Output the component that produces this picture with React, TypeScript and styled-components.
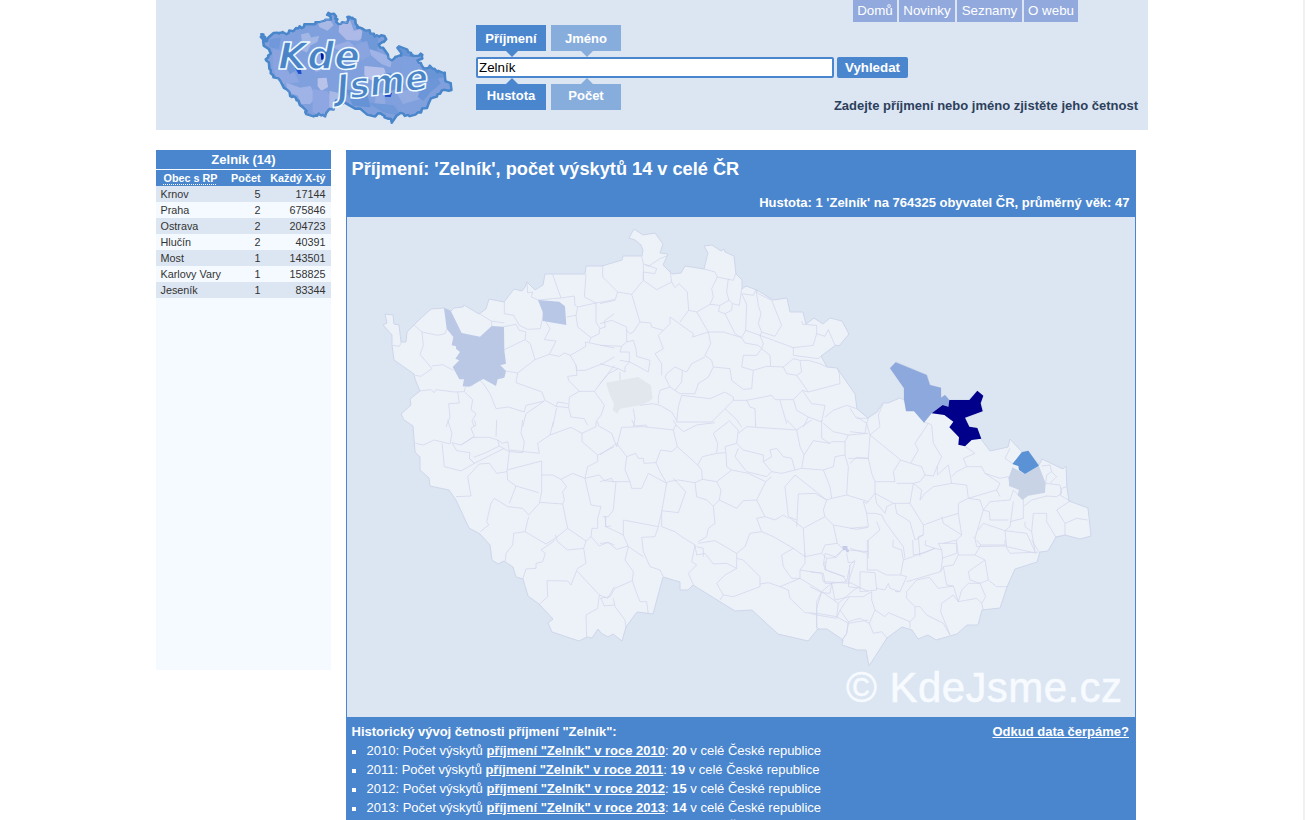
import React from "react";
import styled, { createGlobalStyle } from "styled-components";

const blue = "#4a86ce";
const pale = "#dce6f2";

const GlobalStyle = createGlobalStyle`
  html, body { margin: 0; padding: 0; background: #fff; }
  body { height: 820px; overflow: hidden; font-family: "Liberation Sans", Arial, sans-serif; font-size: 13px; color: #2b3a55; }
  * { box-sizing: border-box; }
`;

const Page = styled.div`
  height: 820px;
  overflow: hidden;
  padding-left: 156px;
  border-right: 2px solid #f1f1f1;
`;
const Header = styled.header`
  width: 992px;
  height: 130px;
  background: ${pale};
  display: grid;
  grid-template-columns: 320px 357px 315px;
`;
const LogoLink = styled.a`
  display: block;
  padding: 8px 0 0 100px;
  svg { display: block; }
`;
const Search = styled.form`
  padding-top: 25px;
  width: 440px;
  margin: 0;
`;
const TabRow = styled.div<{ $below?: boolean }>`
  display: flex;
  gap: 5px;
  height: 26px;
  margin-top: ${(p) => (p.$below ? "6px" : "0")};
`;
const Tab = styled.button<{ $active?: boolean; $below?: boolean }>`
  position: relative;
  width: 70px;
  height: 26px;
  border: 0;
  padding: ${(p) => (p.$below ? "0 0 3px" : "1px 0 0")};
  color: #fff;
  font: bold 13px "Liberation Sans", Arial, sans-serif;
  background: ${(p) => (p.$active ? blue : "#87addd")};
  &::after {
    content: "";
    position: absolute;
    left: 30px;
    ${(p) => (p.$below ? "top: -6px" : "bottom: -6px")};
    border: 6px solid transparent;
    border-width: ${(p) => (p.$below ? "0 6px 6px" : "6px 6px 0")};
    border-${(p) => (p.$below ? "bottom" : "top")}-color: ${(p) => (p.$active ? blue : "#87addd")};
  }
`;
const SearchRow = styled.div`
  display: flex;
  gap: 3px;
  margin-top: 6px;
`;
const SearchInput = styled.input`
  width: 358px;
  height: 21px;
  border: 2px solid ${blue};
  border-radius: 2px;
  background: #fff;
  padding: 0 1px;
  color: #000;
  font: 13.33px "Liberation Sans", Arial, sans-serif;
  outline: none;
`;
const SearchButton = styled.button`
  width: 71px;
  height: 21px;
  border: 0;
  border-radius: 2px;
  padding: 0;
  background: ${blue};
  color: #fff;
  font: bold 13.3px "Liberation Sans", Arial, sans-serif;
`;
const HeaderRight = styled.div`
  display: flex;
  flex-direction: column;
  align-items: flex-end;
  padding-right: 10px;
`;
const Nav = styled.nav`
  display: flex;
  gap: 2px;
  padding-right: 60px;
`;
const NavLink = styled.a<{ $w: number }>`
  width: ${(p) => p.$w}px;
  height: 22px;
  line-height: 21px;
  font-size: 13.33px;
  text-align: center;
  color: #fff;
  background: #91a9dc;
  white-space: nowrap;
`;
const Hint = styled.p`
  margin: 76px 0 0;
  font-weight: bold;
  line-height: 16px;
  white-space: nowrap;
  color: #2c405c;
`;
const Columns = styled.main`
  display: flex;
  gap: 15px;
  margin-top: 20px;
`;
const Sidebar = styled.aside`
  width: 175px;
  height: 520px;
  background: #f4faff;
`;
const SideTitle = styled.h2`
  margin: 0 0 1px;
  height: 19px;
  line-height: 19px;
  font-size: 13px;
  text-align: center;
  color: #fff;
  background: ${blue};
`;
const SideRow = styled.div<{ $head?: boolean; $odd?: boolean }>`
  display: grid;
  grid-template-columns: 61px 39px 65px;
  height: 16px;
  line-height: 16px;
  padding: 0 5px 0 4.5px;
  font-size: 10.8px;
  font-weight: ${(p) => (p.$head ? "bold" : "normal")};
  color: ${(p) => (p.$head ? "#fff" : "#333")};
  background: ${(p) => (p.$head ? blue : p.$odd ? pale : "#f4faff")};
  white-space: nowrap;
`;
const Num = styled.span`
  text-align: right;
`;
const Abbr = styled.span`
  padding-left: 3px;
  text-decoration: underline dotted 1px;
  text-underline-offset: 2px;
  text-decoration-skip-ink: none;
`;
const Panel = styled.section`
  width: 790px;
  height: 700px;
  background: ${blue};
  color: #fff;
  padding: 0 1px;
`;
const PanelHead = styled.div`
  height: 67px;
  padding: 8px 5.5px 0 4.5px;
`;
const Title = styled.h1`
  margin: 0;
  font-size: 18.2px;
  line-height: 22px;
`;
const Density = styled.p`
  margin: 15px 0 0;
  text-align: right;
  font-weight: bold;
  font-size: 13px;
  line-height: 16px;
`;
const MapBox = styled.div`
  height: 500px;
  background: ${pale};
  svg { display: block; }
`;
const HistoryHead = styled.div`
  display: flex;
  justify-content: space-between;
  padding: 5px 6px 0 4.5px;
  font-weight: bold;
  font-size: 13px;
  line-height: 19px;
`;
const SourceLink = styled.a`
  text-decoration: underline;
`;
const History = styled.ul`
  margin: 0;
  padding: 0 0 0 4px;
  list-style: none;
`;
const HistoryItem = styled.li`
  display: flex;
  align-items: center;
  height: 19px;
  font-size: 13px;
  line-height: 19px;
  white-space: pre;
  &::before { content: ""; width: 4px; height: 4px; margin: 2px 10.5px 0 1px; background: #fff; }
  a { font-weight: bold; text-decoration: underline; }
`;

const outline =
  "M385,314 393,315 394,324 399,325 401,342 406,342 407,332 414,325 420,319 431,309 444,308 451,311 454,308 463,307 464,305 479,314 486,309 489,299 504,302 514,289 522,291 525,287 527,282 535,290 543,285 545,274 585,274 586,266 602,266 622,260 623,256 642,256 643,250 641,245 635,240 629,238 634,229 643,235 655,233 663,244 660,253 668,254 663,265 672,274 681,273 685,266 704,269 708,253 704,246 712,245 721,251 724,249 725,252 734,256 736,274 742,280 742,289 746,286 757,290 773,300 787,298 790,312 803,312 806,324 814,318 823,324 830,318 842,321 849,334 839,346 836,345 821,356 827,367 837,368 855,394 857,409 868,418 877,412 883,403 888,403 900,398 904,400 904,388 890,368 896,362 927,375 930,385 941,388 941,398 945,395 949,400 969,400 977,391 983,396 981,403 983,411 965,418 969,427 977,428 981,439 990,451 1008,447 1010,439 1022,452 1028,451 1039,465 1042,459 1063,469 1066,466 1067,488 1069,501 1088,508 1091,536 1080,539 1065,535 1056,537 1048,551 1040,552 1037,562 1015,569 1007,587 1000,608 982,610 978,625 967,625 957,634 936,640 928,635 918,639 912,630 902,627 887,638 869,666 866,650 857,650 842,645 843,640 827,629 818,629 808,641 778,634 752,610 735,611 693,585 688,590 680,590 680,582 663,577 653,614 637,612 626,627 622,641 613,634 608,637 601,633 598,629 592,638 587,637 579,641 552,632 548,623 553,619 539,604 528,596 523,579 516,577 513,567 504,561 498,564 492,560 490,545 480,534 469,528 456,500 449,490 430,486 429,478 420,470 420,457 415,452 413,426 404,420 401,414 411,405 410,399 420,391 415,379 414,374 394,360 392,345 392,335 383,325 387,323Z";

type Sector = { x: number; y: number; lines: string };

/* District borders, grouped by map sector; three units per pixel. */
const sectors: Sector[] = [
  { x: 346, y: 217, lines: "205,325 228,345 275,355 297,350 302,337;228,345 232,385 222,412 258,455;258,447 290,443 322,460;166,376 160,388 140,385;208,475 225,478 258,455;222,522 255,518 265,527 270,518 325,525 355,524 358,510;335,525 340,558 308,560 312,600 300,630;355,524 380,548 375,578 390,590 378,612 385,630;375,508 400,488 412,500 432,530 450,575 487,570 535,585 540,565 595,552;400,290 437,313 437,327;475,255 475,290 503,295 520,325 545,337 583,335 590,300;437,312 475,318;474,329 510,322 520,340 540,345 537,368 475,398;537,368 553,380 567,428 515,468 480,462;515,468 510,497 588,525 597,550 630,568 635,555 665,560;567,428 610,412 630,372 595,368 612,335 600,315;610,412 640,418 655,408 673,415 690,445 693,460 718,460 770,440 805,420;673,415 720,388 718,375 805,393;543,194 545,228 560,225 556,240 576,249 645,243;620,172 645,243 685,237 687,265 695,270 690,295 662,300;720,172 715,240 750,258 795,250 805,247;695,270 750,258 750,315 762,335 778,330 775,312 805,290;690,295 695,330 735,362 730,375;735,362 760,350 760,335;690,445 693,475 665,478 668,490 700,523 745,523 805,445;700,523 670,540 668,572 630,568;745,523 775,565 765,595 752,610 760,630;668,572 675,600 715,605 725,625;632,572 620,630;595,552 540,590 530,630" },
  { x: 600, y: 217, lines: "8,146 8,180 53,225 95,232 130,190 130,140 125,117;0,260 45,250 53,225;95,232 120,315 100,345 90,350 80,340;130,140 145,148 180,125 205,115;135,142 170,155 165,170 130,165 130,190 170,218 215,195 210,160;215,195 225,212 237,200 262,225 266,280 290,285 330,262 340,240 335,215 352,180 345,165 312,156;120,315 152,318 155,330 190,340 175,355 190,395 165,410 185,440 185,475;190,340 210,320 210,300 280,350 278,360 325,345;240,315 266,280;290,285 325,345 332,380 315,415 335,430 340,450 390,455;352,180 400,190 407,170;385,185 380,225 387,250 360,265 330,262;387,250 397,258 395,280 375,290 355,283 360,265;425,215 418,265 397,260;425,230 440,262 437,340 425,362 405,350 375,290;425,230 460,235 468,218 475,265 483,290 475,320 485,345 480,355 437,340;468,218 475,230 515,250 545,325 525,358 485,345;325,345 370,345 425,362;480,355 580,392 640,385 650,350 650,325 608,322 605,312;425,362 435,378 475,385 485,395 470,415 430,415 425,450 460,460;480,355 490,380 485,395 510,415 512,448;460,460 500,448 550,450 580,425 600,430 625,430;580,392 580,415 655,425 663,418;460,460 455,515 430,517 395,490 390,455;340,450 325,480 295,500 285,530 240,530 225,520 245,495 247,460 260,465 275,440 315,420;247,460 225,450 200,470 195,480 210,510 225,520;550,450 560,470 590,475 625,525 720,500 718,470 712,452;600,430 605,465 590,475;625,430 660,440 680,450;245,535 330,545 375,525 400,540 400,550 440,550 515,535 525,548 580,548 607,520 625,525;400,550 375,575 335,615 230,615 235,570 245,535;375,575 410,608 425,630;440,550 450,570 465,575 467,630;540,550 560,620;580,548 590,580 625,600 610,630;607,520 635,560 675,565 665,615 625,600;675,600 700,580 740,565 770,575;0,320 35,310 80,330 80,375 65,388 0,385;80,375 100,370 108,395 110,418 150,430 145,465 90,435 60,430;65,388 60,405 88,405 88,435 75,450 75,465 55,455 0,440;0,500 25,470 55,455;60,490 60,465;100,575 105,605 100,630;120,565 158,560 180,565 215,585 230,610;175,560 175,540 180,520 210,510;650,350 675,358 685,338 705,385" },
  { x: 346, y: 420, lines: "208,70 232,75 265,60 312,72 318,40 305,0;288,70 295,140 345,153 385,130 370,115 372,98 332,92 318,68;318,68 345,75 380,52 430,52 455,60 460,78 415,100 383,112;370,115 385,130 475,85;460,78 490,95 483,155 452,160 430,130 400,132 365,170 375,228 330,230;345,75 385,50 375,25 390,15 385,0;452,0 450,50;455,60 470,70 485,65 490,95 530,98 535,65 525,40 530,0;490,90 580,100 575,70 612,45 622,5;612,45 675,22 708,40 750,20 750,5;708,40 708,65 755,105 755,125 725,140 717,175 680,160 645,178 620,165 587,165;483,150 587,123 587,215 580,250 548,285 530,265 485,260 445,235 435,250 422,305 428,315 403,335;483,155 485,180 510,198 490,250;510,198 578,218;580,247 650,252 665,325 628,355 600,372 537,335 548,290;645,178 662,200 650,215 655,240 650,252;665,325 720,363 735,350 738,325 755,325 755,295 765,260 735,255 717,175;717,175 760,165 775,182 805,185;628,345 635,365 665,390 713,385 720,363;537,335 503,340 500,375 480,400 478,423;628,360 585,390 598,400 590,425 570,430 570,445 540,447 530,478;713,385 720,430 695,445 675,495 665,483 603,482 605,530 580,553;735,350 760,378 785,367 805,375;695,455 760,525 755,565 720,585 722,652;760,525 785,535 805,500;755,105 805,80;770,290 780,290 778,320 795,318;765,535 775,558 805,555" },
  { x: 600, y: 420, lines: "0,20 35,40 50,80 65,22 130,20 220,30 228,15 220,0;0,105 50,70 80,110 75,150 90,185 38,185 35,175 0,185;95,0 105,18 138,15 142,22;48,185 40,270 25,290 15,290 18,320 70,345 70,300 175,320 185,275;80,110 107,100 115,115 130,115 132,130 168,128 182,90 215,95 232,80 220,30;232,80 293,135 307,110 350,100 353,70 340,40 385,5;90,185 95,205 125,205 145,160 200,190 185,275;168,128 180,155 200,190 205,185 235,180 285,188 307,178 305,150 293,135;220,175 257,215 235,278 185,272;285,188 290,230 320,240 340,258 358,240 363,210 350,185 307,178;350,100 378,98 380,140 395,150 350,185;228,15 250,35 290,15 345,8;385,0 415,30 410,70 375,80 378,98;415,40 440,20 590,30 560,0;410,70 430,90 490,105 490,125 515,155 500,170 440,155 405,110 415,85;490,125 515,110 510,90 530,85 550,110 575,115 585,150 545,160 515,155;395,150 445,160 497,185 470,240 430,242 410,265 358,240;497,185 515,170;470,240 495,290 525,300 550,285 565,295;585,165 555,200 565,290 590,300;340,258 345,310 325,325 320,350 295,365;295,370 345,362 410,400 435,380 450,340 485,335 470,295 495,290;185,275 185,320 225,335 245,350 285,375 275,425 290,435 265,460 280,495;175,320 165,350 125,352 130,395 150,440 180,450 190,470;70,345 85,380 130,410;0,370 25,368 50,388 85,378;85,380 75,420 100,455 97,482 110,520 120,545 140,545 145,583;97,482 45,505 30,530 0,535;40,535 45,560 75,600 78,622;285,375 290,405 315,400 340,432 380,430 410,445 410,400;310,410 310,385 290,380;410,445 375,465 350,490 370,525 360,540;370,525 400,530 480,500 480,470 430,420 410,415;485,335 520,350 580,385 615,410 610,325 565,290;580,385 545,405 550,440 575,475 600,475 540,500 505,488 480,492;600,475 665,515 650,545 650,580 615,578 570,535 565,510 540,500;650,580 650,620 658,628;650,580 710,590 745,610 740,640 725,663;590,320 595,222 645,220 680,240 670,270 675,290 610,325;585,165 680,240 695,235 690,200 670,150 605,145 585,150;605,145 612,105 640,62 690,70 695,65 735,65 735,105 705,110 700,140 670,150;590,30 600,80 612,105;590,30 635,0;665,0 665,55 690,70;735,105 745,140 740,225 695,235;735,65 745,45 805,40;745,115 805,115;740,225 805,245;675,290 700,315 770,328 805,322;700,315 712,370 675,375 665,400 615,410;712,370 727,385;742,390 805,395;665,400 680,415 710,412 727,390;680,415 675,450 735,470;600,475 600,450 665,460 670,485 750,490;615,400 615,430 600,450;675,450 675,425;740,400 745,428 765,425 745,485 775,500 805,515;665,515 700,485;665,515 715,550 710,590;715,550 750,520 775,500;745,610 805,600;670,10 700,35 745,45" },
  { x: 850, y: 340, lines: "0,275 45,280 50,250 20,230;0,205 20,235 55,235 50,250 60,285 90,260 85,225 100,190;60,285 152,360 182,370 205,330 195,310 235,250 222,247;60,285 55,355 20,352 0,370;152,360 130,395 135,425 75,425 65,400 55,355;182,370 215,380 225,405 210,425 190,430 140,430;235,250 245,255 250,310 275,350 262,378 250,408 225,405;262,378 262,405 295,375 305,430;190,430 180,490 130,490 75,460 75,425;305,430 250,440 225,460 210,480 215,450 190,430;305,410 320,395 350,380 340,355 375,340 345,319;350,380 395,380 405,400 450,415 475,410 480,435;305,430 350,435 355,475 440,450 450,430 405,400;355,475 325,490 325,520 275,535 220,555 180,490;355,475 390,480 400,510 385,560 375,595 370,590;325,520 335,585 280,550 275,530;400,510 420,485 480,480 490,450 515,475;490,485 480,560 465,572 400,550 385,570;400,510 418,515 420,540 475,540;480,545 520,535 520,475;480,325 465,355 487,370;440,450 450,470;587,430 630,435 635,460 620,470 587,468;575,378 600,375 605,395 590,405 587,430;605,395 620,410 600,430;650,440 635,445 630,465 660,483 620,510 645,550 645,585;520,500 545,480 590,468;645,550 680,535 713,540;550,520 590,520 590,545 618,592 645,585;550,520 545,575 525,560 525,545;545,575 555,635;465,572 530,580 555,635;465,572 470,620 560,640;375,595 380,620 465,618;320,600 320,640 275,655;280,610 320,600 335,585;220,555 220,585 205,590 210,650;75,460 50,490 40,485 50,520 55,560 0,565;75,460 80,490 105,520 110,500 130,490;50,520 75,520 95,525 105,545 130,580 160,620 165,655;80,545 90,570 55,600;135,490 140,520 180,545 195,600 220,585;55,600 55,655;0,625 50,640" },
  { x: 810, y: 540, lines: "172,0 172,90 200,90;250,0 248,20 275,30 280,60 272,105 290,110 270,155 255,155;308,0 310,45 340,40 375,25 345,15 348,0;280,60 375,25 395,30 398,55 392,95 290,125;385,10 440,10 445,45 430,75 400,80;385,10 395,30;400,80 392,95;445,45 495,45 512,15 500,0;512,15 585,15 600,40 690,36;585,15 585,0;665,0 685,33;495,45 525,60 535,120 560,140 592,140;525,60 475,95 480,120 510,130 535,120;400,80 410,135 430,138 445,185 455,150 475,130 510,130;510,130 527,170 515,190 500,175 445,185 430,165 395,190 392,215 420,285;515,190 520,210;358,112 385,145 430,138;358,112 320,120 290,155 290,175 315,200 315,230 300,245 300,265;315,200 330,200 350,225 400,250 420,285;150,95 195,98 200,150 150,155 150,95;200,90 230,105 272,105;200,145 225,150 235,130 240,145 270,155;185,155 185,180 195,210 225,230 235,218 300,245;195,210 178,250 190,280 215,275 232,295;178,250 150,235 115,245;185,155 160,170 118,170 90,210 115,245 110,280 97,300;90,210 80,235 20,225 0,220;20,225 20,268;65,130 75,180 118,170;0,140 35,158 60,160 65,130 110,125 120,75 135,60;0,95 40,100 45,130 65,130;20,205 35,155;20,205 20,225;120,75 115,140 150,145;45,40 40,75 50,90 100,110 110,125;45,40 75,50 98,30" },
];

const tracks = (s: string) => s.split(";").map((p) => "M" + p).join("");

type Region = { x: number; y: number; fill: string; pts: string };
const regions: Region[] = [
  { x: 346, y: 217, fill: "#bac8e6", pts: "294,273 315,283 347,348 402,359 437,327 474,329 475,400 480,440 463,445 480,462 475,482 455,487 450,507 412,486 370,509 350,508 354,487 340,487 320,450 340,430 328,425 342,405 330,395 330,388 317,385 322,360 302,335" },
  { x: 346, y: 217, fill: "#b8c7e6", pts: "576,249 640,254 657,268 661,324 590,312 590,285" },
  { x: 600, y: 217, fill: "#e2e6ed", pts: "18,497 60,490 115,480 153,505 158,545 145,555 120,565 60,575 52,590 38,580 42,560 28,530" },
  { x: 850, y: 340, fill: "#c9d3e6", pts: "487,382 525,402 567,378 587,430 585,458 535,467 517,480 503,465 507,450 477,438 477,410" },
  { x: 850, y: 340, fill: "#5b92d6", pts: "515,337 535,332 567,377 525,402 507,390 505,378 487,372" },
  { x: 850, y: 340, fill: "#8da8dc", pts: "162,145 120,85 137,67 230,105 240,135 273,143 273,173 285,165 298,180 295,200 278,195 245,220 222,248 192,214 168,214 162,180" },
  { x: 850, y: 340, fill: "#00008b", pts: "245,220 278,195 295,200 298,180 358,180 382,152 400,167 392,190 398,214 345,233 358,260 382,264 394,296 365,300 345,319 325,314 327,292 298,262 310,245 283,225" },
  { x: 600, y: 420, fill: "#c9cce8", pts: "727,378 742,378 743,388 747,390 746,397 739,397 738,391 728,391" },
];

function CountryMap() {
  return (
    <svg width="788" height="500" viewBox="347 217 788 500">
      <path d={outline} fill="#edf2f9" stroke="#cfd6ea" strokeWidth="1" />
      {sectors.map((s, i) => (
        <path key={i} d={tracks(s.lines)} transform={`translate(${s.x} ${s.y}) scale(.33333)`} fill="none" stroke="#d0d5ea" strokeWidth="2.2" />
      ))}
      {regions.map((r, i) => (
        <polygon key={i} points={r.pts} transform={`translate(${r.x} ${r.y}) scale(.33333)`} fill={r.fill} />
      ))}
      <text x="846" y="702" fontFamily="Liberation Sans, Arial, sans-serif" fontSize="42" textLength="276" fill="#f7fbff" stroke="#f7fbff" strokeWidth=".5">© KdeJsme.cz</text>
    </svg>
  );
}

type Patch = [string, string];
const patches: Patch[] = [
  ["#a9b9e6", "205,65 235,55 248,75 232,90 210,80"], ["#a3b7e5", "155,105 175,100 182,115 205,110 200,125 180,135 170,155 150,145 158,125"],
  ["#adb9e6", "270,70 300,65 310,95 330,90 345,105 325,120 290,118 268,95"], ["#9fb3e6", "360,150 390,160 425,175 420,200 395,190 365,165"],
  ["#b5c0ea", "345,200 400,205 410,230 380,250 345,225"], ["#b9c3ea", "205,237 228,235 232,260 215,270 205,258"],
  ["#a0b3e6", "110,250 150,265 180,260 195,290 180,310 155,310 145,285 115,275"], ["#8aa3df", "70,150 120,160 115,200 70,205"],
  ["#8ea7e2", "75,210 130,215 145,245 100,250 80,235"], ["#8ea7e2", "190,270 230,275 255,320 235,355 190,335"],
  ["#a9b9e6", "240,275 262,280 265,315 240,320"], ["#6f98d8", "340,90 385,90 380,150 360,145 335,120"],
  ["#6794d6", "430,130 500,145 490,170 460,165 440,150"], ["#7fa0de", "450,170 505,185 500,215 455,215"],
  ["#6895d6", "510,180 570,190 580,230 540,240 520,215"], ["#92abe1", "440,275 500,270 510,295 460,310"],
  ["#6593d6", "290,270 350,285 360,320 310,315"], ["#95abe3", "180,170 215,165 235,200 200,215 180,195"],
  ["#89a4df", "320,135 350,125 360,165 335,180"], ["#98ade3", "250,140 295,125 318,145 280,155"],
  ["#668fd6", "405,220 450,225 460,260 420,270"], ["#7198da", "60,120 90,115 85,145 60,140"],
  ["#92aae2", "380,285 400,280 405,310 375,315"], ["#6e97d8", "100,175 140,180 150,200 120,220"],
  ["#6c96d8", "525,245 560,235 570,250 540,275 520,300 505,290"], ["#7099d9", "360,310 430,318 450,345 400,335"],
  ["#6f98d8", "120,290 150,312 175,340 200,360 180,355 130,310"],
];
const accents: Patch[] = [
  ["#1f4fcf", "135,203 153,210 155,222 145,222"], ["#00138f", "212,158 226,160 226,176 214,180"], ["#1d49c6", "402,278 426,279 422,291 405,290"],
];

const CountryLogo = () => (
  <svg width="205" height="122" viewBox="256 8 205 122">
    <defs>
      <clipPath id="country"><path d={outline} transform="translate(157.5 -45) scale(.2695 .252)" /></clipPath>
    </defs>
    <path d={outline} transform="translate(157.5 -45) scale(.2695 .252)" fill="#7f9fdd" stroke="#4a86ca" strokeWidth="9" strokeLinejoin="round" />
    <g clipPath="url(#country)">
      <g transform="translate(250 0) scale(.33333)">
        {patches.map(([fill, pts], i) => <polygon key={i} points={pts} fill={fill} stroke={fill} strokeWidth="4" strokeLinejoin="round" />)}
        {accents.map(([fill, pts], i) => <polygon key={i} points={pts} fill={fill} />)}
      </g>
      <path d={outline} transform="translate(157.5 -45) scale(.2695 .252)" fill="none" stroke="#4a86ca" strokeWidth="9" strokeLinejoin="round" />
    </g>
    <g fontFamily="DejaVu Sans, sans-serif" fontStyle="oblique" fontWeight="bold" fill="#4a84c6" stroke="#eefaff" strokeWidth="1.5" strokeLinejoin="round">
      <text x="278" y="69" fontSize="37" textLength="82" lengthAdjust="spacingAndGlyphs">Kde</text>
      <text transform="translate(338 100) rotate(-7)" fontSize="35" textLength="92" lengthAdjust="spacingAndGlyphs">Jsme</text>
    </g>
  </svg>
);

const towns: [string, string, string][] = [
  ["Krnov", "5", "17144"], ["Praha", "2", "675846"], ["Ostrava", "2", "204723"], ["Hlučín", "2", "40391"],
  ["Most", "1", "143501"], ["Karlovy Vary", "1", "158825"], ["Jeseník", "1", "83344"],
];
const nav: [string, number][] = [["Domů", 44], ["Novinky", 56], ["Seznamy", 65], ["O webu", 54]];
const history: [number, number][] = [[2010, 20], [2011, 19], [2012, 15], [2013, 14], [2014, 14]];

export default function App() {
  return (
    <Page>
      <GlobalStyle />
      <Header>
        <LogoLink><CountryLogo /></LogoLink>
        <Search>
          <TabRow><Tab type="button" $active>Příjmení</Tab><Tab type="button">Jméno</Tab></TabRow>
          <SearchRow><SearchInput defaultValue="Zelník" /><SearchButton type="button">Vyhledat</SearchButton></SearchRow>
          <TabRow $below><Tab type="button" $below $active>Hustota</Tab><Tab type="button" $below>Počet</Tab></TabRow>
        </Search>
        <HeaderRight>
          <Nav>{nav.map(([label, w]) => <NavLink key={label} $w={w}>{label}</NavLink>)}</Nav>
          <Hint>Zadejte příjmení nebo jméno zjistěte jeho četnost</Hint>
        </HeaderRight>
      </Header>
      <Columns>
        <Sidebar>
          <SideTitle>Zelník (14)</SideTitle>
          <SideRow $head><Abbr>Obec s RP</Abbr><Num>Počet</Num><Num>Každý X-tý</Num></SideRow>
          {towns.map(([name, count, every], i) => (
            <SideRow key={name} $odd={i % 2 === 0}><span>{name}</span><Num>{count}</Num><Num>{every}</Num></SideRow>
          ))}
        </Sidebar>
        <Panel>
          <PanelHead>
            <Title>Příjmení: 'Zelník', počet výskytů 14 v celé ČR</Title>
            <Density>Hustota: 1 'Zelník' na 764325 obyvatel ČR, průměrný věk: 47</Density>
          </PanelHead>
          <MapBox><CountryMap /></MapBox>
          <HistoryHead><span>Historický vývoj četnosti příjmení "Zelník":</span><SourceLink>Odkud data čerpáme?</SourceLink></HistoryHead>
          <History>
            {history.map(([year, n]) => (
              <HistoryItem key={year}>
                {year}: Počet výskytů <a>příjmení "Zelník" v roce {year}</a>: <b>{n}</b> v celé České republice
              </HistoryItem>
            ))}
          </History>
        </Panel>
      </Columns>
    </Page>
  );
}
